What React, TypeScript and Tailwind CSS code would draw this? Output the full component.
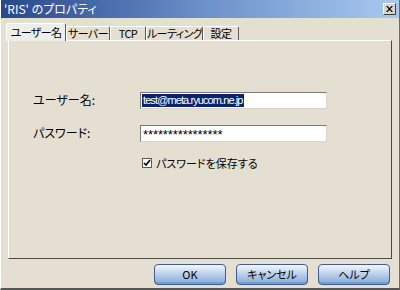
import React from "react";

const jp = "[font-family:'Noto_Sans_CJK_JP','Liberation_Sans',sans-serif] [font-feature-settings:'palt']";

const Tab = ({ label, w, active }: { label: string; w: string; active?: boolean }) =>
  active ? (
    <div
      className={`${w} h-[18px] -mb-px relative z-10 flex items-center justify-center whitespace-nowrap overflow-hidden bg-[#eeeee8] border-l border-t border-white border-r border-r-[#5a5a5a] rounded-t-[2px] text-[11px] tracking-[-0.6px] text-black`}
    >
      {label}
    </div>
  ) : (
    <div
      className={`${w} h-[14px] flex items-center justify-center whitespace-nowrap overflow-hidden border-l border-t border-white border-r border-r-[#5a5a5a] rounded-t-[2px] text-[11px] tracking-[-0.6px] text-black`}
    >
      {label}
    </div>
  );

const Button = ({ label }: { label: string }) => (
  <button className="w-[72px] h-[21px] rounded-[4px] border border-[#3b5d98] bg-gradient-to-b from-[#f4f7fc] via-[#b9cdea] to-[#8aa8d8] shadow-[inset_0_-2px_0_#7b9ad0] text-[11px] text-black flex items-center justify-center">
    {label}
  </button>
);

export default function App() {
  return (
    <div
      className={`${jp} w-[400px] h-[290px] bg-[#e5dfd1] flex flex-col border-l border-l-white border-r border-r-[#6b6b6b] border-b-2 border-b-[#555555] overflow-hidden`}
    >
      {/* title bar */}
      <div className="h-[18px] shrink-0 flex items-center justify-between pl-[3px] pr-[3px] bg-gradient-to-r from-[#28488c] via-[#6b8fc8] to-[#a8caf0]">
        <span className="text-white text-[12px] leading-none">'RIS' のプロパティ</span>
        <div className="w-[13px] h-[12px] bg-[#d8d4cc] border border-t-white border-l-white border-r-[#404040] border-b-[#404040] flex items-center justify-center">
          <svg width="7" height="6" viewBox="0 0 7 6">
            <path d="M0 0h1.5l2 2 2-2H7L4.3 3 7 6H5.5l-2-2-2 2H0l2.7-3z" fill="#000" />
          </svg>
        </div>
      </div>

      {/* tabs */}
      <div className="mt-[5px] pl-[5px] h-[17px] flex items-end shrink-0">
        <Tab label="ユーザー名" w="w-[60px]" active />
        <Tab label="サーバー" w="w-[44px]" />
        <Tab label="TCP" w="w-[36px]" />
        <Tab label="ルーティング" w="w-[57px]" />
        <Tab label="設定" w="w-[36px]" />
      </div>

      {/* panel */}
      <div className="ml-[7px] w-[384px] h-[219px] shrink-0 border-l border-t border-white border-r border-b border-r-[#4a4a4a] border-b-[#4a4a4a] pt-[50px] pl-[24px]">
        <div className="grid grid-cols-[107px_187px] items-center gap-y-[15px] text-[12px] text-black">
          <span>ユーザー名:</span>
          <div className="h-[17px] bg-white border border-t-[#7a7a7a] border-l-[#7a7a7a] border-r-[#d8d4cc] border-b-[#d8d4cc] flex items-center pl-px">
            <span className="bg-[#0a246a] text-white text-[11px] tracking-[-0.9px] leading-[13px] px-px [font-family:'Liberation_Sans',sans-serif]">
              test@meta.ryucom.ne.jp
            </span>
          </div>
          <span>パスワード:</span>
          <div className="h-[17px] bg-white border border-t-[#7a7a7a] border-l-[#7a7a7a] border-r-[#d8d4cc] border-b-[#d8d4cc] flex items-center pl-[2px] [font-family:'Liberation_Sans',sans-serif] text-[13px] tracking-[-0.1px] pt-[4px]">
            ****************
          </div>
          <span />
          <label className="flex items-center gap-[4px] mt-[-2px] pl-[2px]">
            <span className="w-[10px] h-[10px] bg-white border border-[#5a5a5a] flex items-center justify-center">
              <svg width="8" height="8" viewBox="0 0 8 8">
                <path d="M1 4l2 2 4-5" stroke="#000" strokeWidth="1.6" fill="none" />
              </svg>
            </span>
            <span className="text-[11px]">パスワードを保存する</span>
          </label>
        </div>
      </div>

      {/* buttons */}
      <div className="mt-[5px] pr-[9px] flex justify-end gap-[10px]">
        <Button label="OK" />
        <Button label="キャンセル" />
        <Button label="ヘルプ" />
      </div>
    </div>
  );
}
